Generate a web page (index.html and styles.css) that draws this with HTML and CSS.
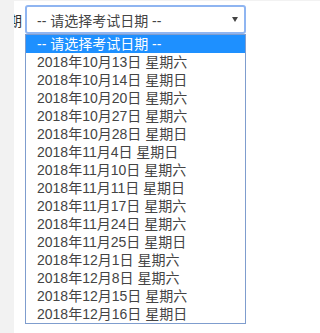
FILE: index.html
```html
<!DOCTYPE html>
<html lang="zh-CN">
<head>
<meta charset="utf-8">
<title>考试日期</title>
<link rel="stylesheet" href="styles.css">
</head>
<body>
<div class="page">
  <div class="side"></div>
  <div class="field">
    <div class="label"><span>考试日期</span></div>
    <div class="picker">
      <div class="select">
        <span>-- 请选择考试日期 --</span>
        <svg class="arrow" width="6" height="5" viewBox="0 0 6 5"><polygon points="0,0 6,0 3,5" fill="#444"/></svg>
      </div>
      <ul class="list">
        <li class="selected">-- 请选择考试日期 --</li>
        <li>2018年10月13日 星期六</li>
        <li>2018年10月14日 星期日</li>
        <li>2018年10月20日 星期六</li>
        <li>2018年10月27日 星期六</li>
        <li>2018年10月28日 星期日</li>
        <li>2018年11月4日 星期日</li>
        <li>2018年11月10日 星期六</li>
        <li>2018年11月11日 星期日</li>
        <li>2018年11月17日 星期六</li>
        <li>2018年11月24日 星期六</li>
        <li>2018年11月25日 星期日</li>
        <li>2018年12月1日 星期六</li>
        <li>2018年12月8日 星期六</li>
        <li>2018年12月15日 星期六</li>
        <li>2018年12月16日 星期日</li>
      </ul>
    </div>
  </div>
</div>
</body>
</html>
```

FILE: styles.css
```css
html, body {
  margin: 0;
  padding: 0;
  background: #fff;
}

body {
  font-family: "Liberation Sans", Arial, "Noto Sans CJK SC", sans-serif;
  font-size: 14px;
  color: #444;
}

.page {
  display: flex;
  border-top: 1px solid #f2f2f2;
  height: 332px;
}

.side {
  width: 14px;
  flex: none;
  background: #f2f2f2;
}

.field {
  display: flex;
  align-items: flex-start;
  padding-top: 4px;
}

.label {
  width: 8px;
  height: 29px;
  margin-right: 3px;
  overflow: hidden;
  display: flex;
  justify-content: flex-end;
  align-items: center;
  color: #333;
  white-space: nowrap;
  flex: none;
}

.picker {
  width: 221px;
}

.select {
  box-sizing: border-box;
  height: 29px;
  border: 2px solid #8fb5f1;
  border-radius: 3px;
  padding: 0 6px 0 10px;
  display: flex;
  align-items: center;
  justify-content: space-between;
  color: #444;
}

.arrow {
  display: block;
}

.list {
  margin: 0;
  padding: 0;
  list-style: none;
  border: 1px solid #7f9dce;
}

.list li {
  height: 18px;
  line-height: 18px;
  padding-left: 11px;
  white-space: nowrap;
}

.list li.selected {
  background: #1e90ff;
  color: #fff;
}
```
